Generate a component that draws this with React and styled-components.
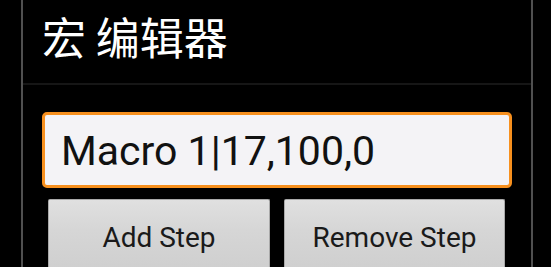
import React from "react";
import styled, { createGlobalStyle } from "styled-components";

const Global = createGlobalStyle`
  html, body { margin: 0; padding: 0; background: #000; }
  #root { width: 551px; height: 267px; overflow: hidden; }
`;

const Screen = styled.div`
  width: 551px;
  height: 267px;
  background: #000;
  overflow: hidden;
  display: flex;
`;

const Dialog = styled.div`
  margin-left: 21px;
  width: 508px;
  height: 267px;
  border-left: 2px solid #505050;
  border-right: 2px solid #505050;
  background: #000;
  display: flex;
  flex-direction: column;
`;

const TitleBar = styled.div`
  height: 85px;
  box-sizing: border-box;
  padding: 0 0 12px 19px;
  display: flex;
  align-items: center;
  border-bottom: 2px solid #161616;
  color: #fff;
  font-family: "Noto Sans CJK SC", "Noto Sans", sans-serif;
  font-size: 44px;
  line-height: 50px;
  flex-shrink: 0;
`;

const Content = styled.div`
  padding: 27px 19px 0 19px;
  display: flex;
  flex-direction: column;
  gap: 11px;
`;

const Field = styled.div`
  height: 76px;
  box-sizing: border-box;
  border: 3px solid #f7901e;
  border-radius: 5px;
  background: #f4f3f6;
  display: flex;
  align-items: center;
  padding-left: 16px;
  padding-top: 2px;
  font-family: Roboto, "Liberation Sans", sans-serif;
  font-size: 41px;
  color: #111;
`;

const ButtonRow = styled.div`
  display: flex;
  gap: 14px;
  padding: 0 7px 0 6px;
`;

const Button = styled.div`
  flex: 0 0 ${(p) => p.$w}px;
  height: 76px;
  box-sizing: border-box;
  border: 1px solid #a9a9a9;
  border-bottom: none;
  border-radius: 2px 2px 0 0;
  background: linear-gradient(#e0e0e0, #d6d6d6 40%, #cecece);
  display: flex;
  align-items: center;
  justify-content: center;
  font-family: Roboto, "Liberation Sans", sans-serif;
  font-size: 28px;
  color: #1a1a1a;
`;

export default function App() {
  return (
    <>
      <Global />
      <Screen>
        <Dialog>
          <TitleBar>宏 编辑器</TitleBar>
          <Content>
            <Field>Macro 1|17,100,0</Field>
            <ButtonRow>
              <Button $w={222}>Add Step</Button>
              <Button $w={221}>Remove Step</Button>
            </ButtonRow>
          </Content>
        </Dialog>
      </Screen>
    </>
  );
}
